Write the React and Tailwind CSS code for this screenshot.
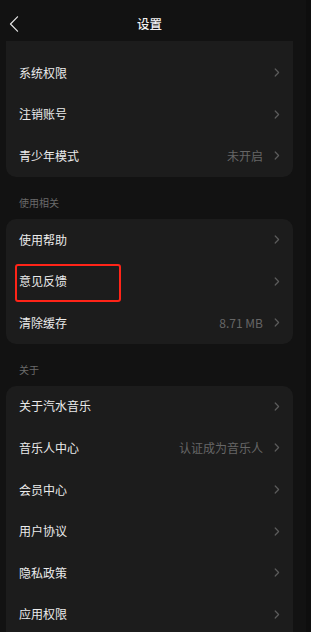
import React from "react";

const font = { fontFamily: '"Noto Sans CJK SC", "Noto Sans", sans-serif' };

function Chevron() {
  return (
    <svg width="6" height="9" viewBox="0 0 6 9" className="shrink-0">
      <path d="M1.2 1 L4.6 4.5 L1.2 8" fill="none" stroke="#5c5c5c" strokeWidth="1.2" strokeLinecap="round" strokeLinejoin="round" />
    </svg>
  );
}

function Row({ label, value }) {
  return (
    <div className="flex h-[41.6px] items-center pl-[13px] pr-[13px]">
      <span className="flex-1 text-[12px] leading-none text-[#ebebeb]">{label}</span>
      {value && <span className="mr-[11px] text-[12px] leading-none text-[#666666]">{value}</span>}
      <Chevron />
    </div>
  );
}

function SectionLabel({ children }) {
  return (
    <div className="flex h-[42px] items-start pl-[19px] pt-[21px] text-[10px] leading-none text-[#6a6a6a]">
      {children}
    </div>
  );
}

export default function App() {
  return (
    <div className="flex h-[632px] w-[311px] overflow-hidden bg-[#0e0e0e]" style={font}>
      <div className="flex w-[306px] flex-col bg-[#121212]">
        <div className="w-[299px]">
          <div className="relative flex h-[41px] items-center justify-center pt-[7px]">
            <svg width="10" height="16" viewBox="0 0 10 16" className="absolute left-[9px] top-[16px]">
              <path d="M8.5 0.8 L1.5 8 L8.5 15.2" fill="none" stroke="#e6e6e6" strokeWidth="1.2" strokeLinecap="round" strokeLinejoin="round" />
            </svg>
            <span className="text-[12.5px] font-medium leading-none text-[#f0f0f0]">设置</span>
          </div>
          <div className="mx-[6px] rounded-b-[10px] bg-[#1c1c1c] pt-[11px]">
            <Row label="系统权限" />
            <Row label="注销账号" />
            <Row label="青少年模式" value="未开启" />
          </div>
          <SectionLabel>使用相关</SectionLabel>
          <div className="relative mx-[6px] rounded-[10px] bg-[#1c1c1c]">
            <Row label="使用帮助" />
            <Row label="意见反馈" />
            <Row label="清除缓存" value="8.71 MB" />
            <div className="absolute left-[9px] top-[45px] h-[38px] w-[106px] rounded-[3px] border-2 border-[#ff2418]" />
          </div>
          <SectionLabel>关于</SectionLabel>
          <div className="mx-[6px] rounded-t-[10px] bg-[#1c1c1c]">
            <Row label="关于汽水音乐" />
            <Row label="音乐人中心" value="认证成为音乐人" />
            <Row label="会员中心" />
            <Row label="用户协议" />
            <Row label="隐私政策" />
            <Row label="应用权限" />
          </div>
        </div>
      </div>
    </div>
  );
}
